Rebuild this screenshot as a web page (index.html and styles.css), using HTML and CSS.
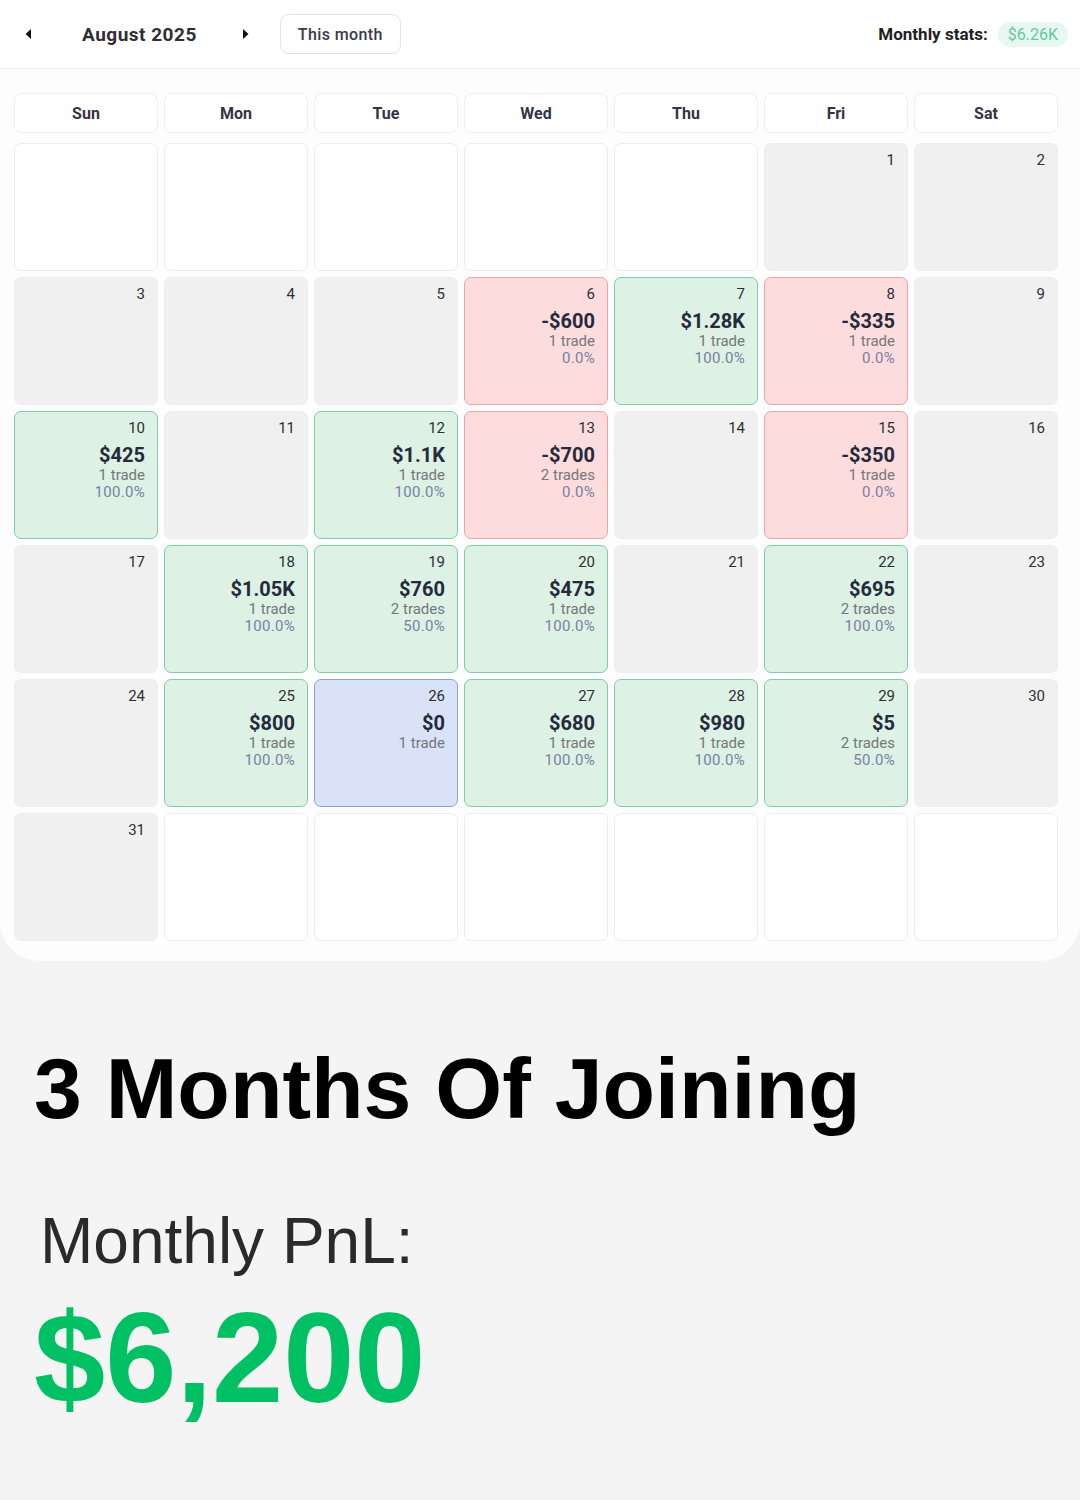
FILE: index.html
```html
<!DOCTYPE html>
<html lang="en">
<head>
<meta charset="utf-8">
<title>Calendar</title>
<link rel="stylesheet" href="styles.css">
</head>
<body>
<div class="panel">
  <div class="topbar">
    <div class="nav">
      <button class="arrow"><svg width="8" height="12" viewBox="0 0 8 12"><path d="M7 1 L1.5 6 L7 11 Z" fill="#111"/></svg></button>
      <div class="title">August 2025</div>
      <button class="arrow"><svg width="8" height="12" viewBox="0 0 8 12"><path d="M1 1 L6.5 6 L1 11 Z" fill="#111"/></svg></button>
      <button class="today">This month</button>
    </div>
    <div class="stats">
      <span class="stats-label">Monthly stats:</span>
      <span class="badge">$6.26K</span>
    </div>
  </div>

  <div class="grid">
    <div class="head">Sun</div><div class="head">Mon</div><div class="head">Tue</div><div class="head">Wed</div><div class="head">Thu</div><div class="head">Fri</div><div class="head">Sat</div>

    <div class="cell empty"></div><div class="cell empty"></div><div class="cell empty"></div><div class="cell empty"></div><div class="cell empty"></div>
    <div class="cell none"><div class="day">1</div></div>
    <div class="cell none"><div class="day">2</div></div>

    <div class="cell none"><div class="day">3</div></div>
    <div class="cell none"><div class="day">4</div></div>
    <div class="cell none"><div class="day">5</div></div>
    <div class="cell loss"><div class="day">6</div><div class="amt">-$600</div><div class="tr">1 trade</div><div class="pct">0.0%</div></div>
    <div class="cell win"><div class="day">7</div><div class="amt">$1.28K</div><div class="tr">1 trade</div><div class="pct">100.0%</div></div>
    <div class="cell loss"><div class="day">8</div><div class="amt">-$335</div><div class="tr">1 trade</div><div class="pct">0.0%</div></div>
    <div class="cell none"><div class="day">9</div></div>

    <div class="cell win"><div class="day">10</div><div class="amt">$425</div><div class="tr">1 trade</div><div class="pct">100.0%</div></div>
    <div class="cell none"><div class="day">11</div></div>
    <div class="cell win"><div class="day">12</div><div class="amt">$1.1K</div><div class="tr">1 trade</div><div class="pct">100.0%</div></div>
    <div class="cell loss"><div class="day">13</div><div class="amt">-$700</div><div class="tr">2 trades</div><div class="pct">0.0%</div></div>
    <div class="cell none"><div class="day">14</div></div>
    <div class="cell loss"><div class="day">15</div><div class="amt">-$350</div><div class="tr">1 trade</div><div class="pct">0.0%</div></div>
    <div class="cell none"><div class="day">16</div></div>

    <div class="cell none"><div class="day">17</div></div>
    <div class="cell win"><div class="day">18</div><div class="amt">$1.05K</div><div class="tr">1 trade</div><div class="pct">100.0%</div></div>
    <div class="cell win"><div class="day">19</div><div class="amt">$760</div><div class="tr">2 trades</div><div class="pct">50.0%</div></div>
    <div class="cell win"><div class="day">20</div><div class="amt">$475</div><div class="tr">1 trade</div><div class="pct">100.0%</div></div>
    <div class="cell none"><div class="day">21</div></div>
    <div class="cell win"><div class="day">22</div><div class="amt">$695</div><div class="tr">2 trades</div><div class="pct">100.0%</div></div>
    <div class="cell none"><div class="day">23</div></div>

    <div class="cell none"><div class="day">24</div></div>
    <div class="cell win"><div class="day">25</div><div class="amt">$800</div><div class="tr">1 trade</div><div class="pct">100.0%</div></div>
    <div class="cell even"><div class="day">26</div><div class="amt">$0</div><div class="tr">1 trade</div></div>
    <div class="cell win"><div class="day">27</div><div class="amt">$680</div><div class="tr">1 trade</div><div class="pct">100.0%</div></div>
    <div class="cell win"><div class="day">28</div><div class="amt">$980</div><div class="tr">1 trade</div><div class="pct">100.0%</div></div>
    <div class="cell win"><div class="day">29</div><div class="amt">$5</div><div class="tr">2 trades</div><div class="pct">50.0%</div></div>
    <div class="cell none"><div class="day">30</div></div>

    <div class="cell none"><div class="day">31</div></div>
    <div class="cell empty"></div><div class="cell empty"></div><div class="cell empty"></div><div class="cell empty"></div><div class="cell empty"></div><div class="cell empty"></div>
  </div>
</div>

<div class="bottom">
  <h1 class="headline">3 Months Of Joining</h1>
  <div class="pnl-label">Monthly PnL:</div>
  <div class="pnl-value">$6,200</div>
</div>
</body>
</html>
```

FILE: styles.css
```css
* { box-sizing: border-box; }
html, body { margin: 0; padding: 0; }
body {
  background: #f4f4f4;
  font-family: Roboto, "Liberation Sans", Arial, sans-serif;
  width: 1080px;
  height: 1500px;
  overflow: hidden;
}
.panel {
  background: #fdfdfd;
  border-radius: 0 0 40px 40px;
  padding-bottom: 20px;
}
.topbar {
  height: 69px;
  border-bottom: 1px solid #ededed;
  background: #fff;
  display: flex;
  align-items: center;
  justify-content: space-between;
  padding: 0 12px 0 12px;
}
.nav { display: flex; align-items: center; }
.arrow {
  width: 32px; height: 32px;
  border: none; background: transparent;
  display: flex; align-items: center; justify-content: center;
  padding: 0;
}
.title {
  font-size: 19px;
  font-weight: 700;
  color: #2e2e33;
  margin: 0 33px 0 38px;
  letter-spacing: 0.5px;
}
.today {
  margin-left: 18px;
  height: 40px;
  width: 121px;
  border: 1px solid #e2e2e6;
  border-radius: 9px;
  background: #fff;
  font-family: Roboto, "Liberation Sans", sans-serif;
  font-size: 16px;
  font-weight: 500;
  color: #3a3a4c;
  letter-spacing: 0.4px;
  padding: 0;
}
.stats { display: flex; align-items: center; }
.stats-label {
  font-size: 17px;
  font-weight: 700;
  color: #1e1e24;
  margin-right: 10px;
}
.badge {
  background: #e8f7f0;
  color: #5ec9a0;
  font-size: 16px;
  height: 25px;
  line-height: 25px;
  padding: 0 10px;
  border-radius: 13px;
}
.grid {
  display: grid;
  grid-template-columns: repeat(7, 144px);
  grid-template-rows: 44px repeat(6, 128px);
  column-gap: 6px;
  row-gap: 6px;
  padding: 24px 0 0 14px;
}
.head {
  height: 40px;
  align-self: start;
  background: #fff;
  border: 1px solid #eeeef0;
  border-radius: 8px;
  display: flex;
  align-items: center;
  justify-content: center;
  font-size: 16px;
  font-weight: 700;
  color: #343446;
}
.cell {
  border-radius: 7px;
  border: 1px solid transparent;
  padding: 7px 12px 0 8px;
  text-align: right;
}
.empty { background: #fff; border-color: #ececee; }
.none { background: #f0f0f1; border-color: #eeeef0; }
.win { background: #ddf1e5; border-color: #7fcca8; }
.loss { background: #fcdcdd; border-color: #f0a3a6; }
.even { background: #dae2f7; border-color: #8c9ee0; }
.day {
  font-size: 15px;
  line-height: 18px;
  color: #2f2f33;
}
.amt {
  margin-top: 6px;
  font-size: 20px;
  line-height: 24px;
  font-weight: 700;
  color: #252b3b;
}
.tr {
  font-size: 15px;
  line-height: 17px;
  color: #75787c;
}
.pct {
  font-size: 15px;
  line-height: 17px;
  color: #7b80a2;
  letter-spacing: 0.3px;
}
.bottom {
  padding: 0 0 0 34px;
}
.headline {
  margin: 77px 0 0 0;
  font-family: "Liberation Sans", Arial, sans-serif;
  font-size: 86px;
  font-weight: 700;
  line-height: 100px;
  color: #000;
}
.pnl-label {
  margin: 65px 0 0 6px;
  font-family: "Liberation Sans", Arial, sans-serif;
  font-size: 64px;
  line-height: 76px;
  color: #2a2a2a;
}
.pnl-value {
  margin-top: 14px;
  font-family: "Liberation Sans", Arial, sans-serif;
  font-size: 128px;
  font-weight: 700;
  line-height: 130px;
  color: #00c064;
}
```
